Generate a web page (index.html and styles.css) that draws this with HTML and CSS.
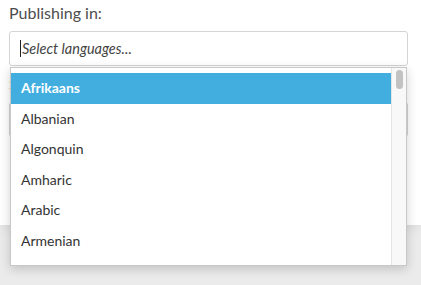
FILE: index.html
```html
<!DOCTYPE html>
<html lang="en">
<head>
    <meta charset="UTF-8">
    <title>Publishing languages</title>
    <link rel="stylesheet" href="styles.css">
</head>
<body>
    <div class="card">
        <div class="field">
            <label class="field-label">Publishing in:</label>
            <div class="picker">
                <div class="picker-input"><span class="caret"></span>Select languages...</div>
                <div class="dropdown">
                    <ul class="options">
                        <li class="option active">Afrikaans</li>
                        <li class="option">Albanian</li>
                        <li class="option">Algonquin</li>
                        <li class="option">Amharic</li>
                        <li class="option">Arabic</li>
                        <li class="option">Armenian</li>
                    </ul>
                    <div class="scrollbar"><div class="thumb"></div></div>
                </div>
            </div>
        </div>
        <div class="field">
            <label class="field-label">Subjects:</label>
            <div class="picker-input plain"></div>
        </div>
    </div>
</body>
</html>
```

FILE: styles.css
```css
* {
    margin: 0;
    padding: 0;
    box-sizing: border-box;
}

body {
    font-family: Lato, 'Noto Sans', sans-serif;
    background: #ebebec;
    color: #333;
    height: 285px;
    overflow: hidden;
}

.card {
    background: #fff;
    height: 225px;
    padding: 3px 13px 0 9px;
    box-shadow: 0 2px 12px rgba(0, 0, 0, 0.08);
}

.field-label {
    display: block;
    font-size: 16px;
    line-height: 19px;
    color: #4d4d4d;
    margin-bottom: 9px;
}

.field + .field {
    margin-top: 8px;
}

.picker {
    position: relative;
}

.picker-input {
    height: 35px;
    border: 1px solid #d4d4d4;
    border-radius: 3px;
    padding: 0 10px;
    display: flex;
    align-items: center;
    font-size: 14.5px;
    font-style: italic;
    color: #444;
}

.caret {
    display: inline-block;
    width: 1px;
    height: 17px;
    background: #222;
    margin-right: 1px;
}

.dropdown {
    position: absolute;
    top: 36px;
    left: 1px;
    right: 1px;
    height: 199px;
    background: #fff;
    border: 1px solid #c8c8c8;
    box-shadow: 0 3px 10px rgba(0, 0, 0, 0.18);
    display: flex;
    overflow: hidden;
    z-index: 10;
}

.options {
    list-style: none;
    flex: 1;
    padding-top: 5px;
}

.option {
    height: 30.5px;
    line-height: 30.5px;
    padding-left: 10px;
    font-size: 14px;
    color: #333;
}

.option.active {
    background: #42aee0;
    color: #fff;
    font-weight: 700;
}

.scrollbar {
    width: 15px;
    background: #f8f8f8;
    border-left: 1px solid #e4e4e4;
    padding: 2px 3px 0 4px;
}

.thumb {
    height: 19px;
    background: #c2c2c2;
    border-radius: 4px;
}
```
